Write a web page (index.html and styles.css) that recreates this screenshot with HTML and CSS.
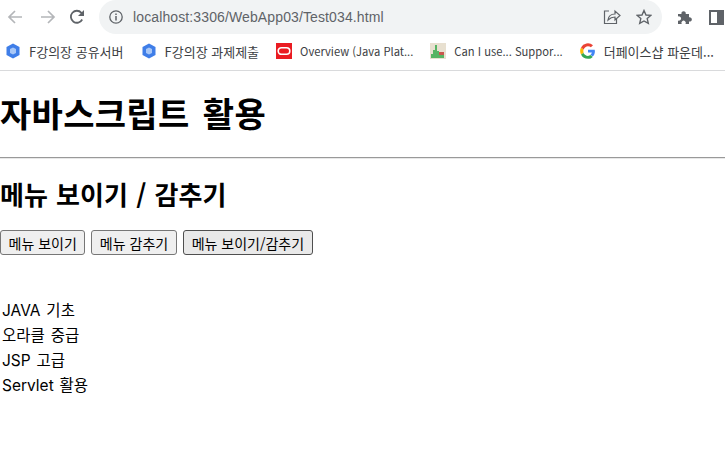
FILE: index.html
```html
<!DOCTYPE html>
<html lang="ko">
<head>
    <meta charset="UTF-8">
    <title>Test034</title>
    <link rel="stylesheet" href="styles.css">
</head>
<body>
    <div class="toolbar">
        <svg class="nav-icon" width="16" height="16" viewBox="0 0 16 16"><path d="M15 8H2M8 2 2 8l6 6" fill="none" stroke="#b4b6b9" stroke-width="1.7"/></svg>
        <svg class="nav-icon fwd" width="16" height="16" viewBox="0 0 16 16"><path d="M1 8h13M8 2l6 6-6 6" fill="none" stroke="#b4b6b9" stroke-width="1.7"/></svg>
        <svg class="nav-icon reload" width="16" height="16" viewBox="0 0 16 16"><path d="M13.2 10.5A6 6 0 1 1 12.4 3.8L14 5.5" fill="none" stroke="#5f6368" stroke-width="1.8"/><path d="M15 1v6H9z" fill="#5f6368"/></svg>
        <div class="omnibox">
            <svg width="16" height="16" viewBox="0 0 16 16"><circle cx="8" cy="8" r="6.2" fill="none" stroke="#5f6368" stroke-width="1.3"/><path d="M8 7v4.4M8 4.4v1.5" stroke="#5f6368" stroke-width="1.5"/></svg>
            <span class="url">localhost:3306/WebApp03/Test034.html</span>
            <svg class="share" width="18" height="16" viewBox="0 0 18 16"><path d="M6 2H1.500v12.500h12V10" fill="none" stroke="#5f6368" stroke-width="1.200"/><path d="M5 11c.5-4 3-6 7-6V2l5 4.500-5 4.500V8c-3 0-5 1-7 3z" fill="none" stroke="#5f6368" stroke-width="1.200"/></svg>
            <svg class="star" width="16" height="16" viewBox="0 0 16 16"><path d="m8 1.500 2 4.500 4.800.4-3.600 3.200 1.100 4.800L8 12l-4.300 2.400 1.100-4.800L1.200 6.400 6 6z" fill="none" stroke="#5f6368" stroke-width="1.400"/></svg>
        </div>
        <svg class="puzzle" width="16" height="16" viewBox="0 0 16 16"><path d="M1 5h3.500a2.200 2.200 0 1 1 4.200 0H12v3.300a2.200 2.200 0 1 1 0 4.200V15H8.500a2.200 2.200 0 1 0-3.800 0H1v-3.500a2.200 2.200 0 1 0 0-4z" fill="#5f6368"/></svg>
        <svg class="panel" width="15" height="15" viewBox="0 0 15 15"><rect x="1" y="1" width="13" height="13" fill="none" stroke="#5f6368" stroke-width="2"/><rect x="8" y="1" width="6" height="13" fill="#5f6368"/></svg>
    </div>
    <div class="bookmarks">
        <a class="mark ko">
            <svg width="16" height="16" viewBox="0 0 16 16"><path d="M8 0.500 14.500 4v8L8 15.500 1.500 12V4z" fill="#3f7ee8"/><path d="M8 4.500 11 6v4L8 11.500 5 10V6z" fill="#a9c8f7"/></svg>
            <span>F강의장 공유서버</span>
        </a>
        <a class="mark ko">
            <svg width="16" height="16" viewBox="0 0 16 16"><path d="M8 0.500 14.500 4v8L8 15.500 1.500 12V4z" fill="#3f7ee8"/><path d="M8 4.500 11 6v4L8 11.500 5 10V6z" fill="#a9c8f7"/></svg>
            <span>F강의장 과제제출</span>
        </a>
        <a class="mark">
            <svg width="16" height="16" viewBox="0 0 16 16"><rect width="16" height="16" fill="#ea1b22"/><rect x="2.200" y="4.700" width="11.600" height="6.600" rx="3.300" fill="none" stroke="#fff" stroke-width="1.600"/></svg>
            <span>Overview (Java Plat...</span>
        </a>
        <a class="mark">
            <svg width="16" height="16" viewBox="0 0 16 16"><rect width="16" height="16" fill="#e8e0d0"/><path d="M1 15V11h2V7h2V2h2v6h2v4h5v3z" fill="#56b463"/><rect x="9" y="9" width="5" height="3" fill="#c9584d"/></svg>
            <span>Can I use... Suppor...</span>
        </a>
        <a class="mark ko">
            <svg width="16" height="16" viewBox="0 0 16 16"><path d="M14.700 6.700H8v2.800h3.900a3.900 3.900 0 0 1-1.500 2.300l2.300 1.800c1.500-1.300 2.200-3.300 2.200-5.300z" fill="#4285f4"/><path d="M3.600 9.500l-.6.400-2 1.600A7.800 7.800 0 0 0 8 15.800c2 0 3.700-.7 4.700-1.900l-2.300-1.800c-.6.500-1.400.8-2.400.8-1.900 0-3.600-1.300-4.400-2.400z" fill="#34a853"/><path d="M1 4.500a7.800 7.800 0 0 0 0 7l2.600-2a4.700 4.700 0 0 1 0-3z" fill="#fbbc05"/><path d="M8 3.200c1.100 0 2.100.4 2.900 1.100l2.100-2.100A7.800 7.800 0 0 0 1 4.500l2.600 2C4.400 4.500 6.100 3.200 8 3.200z" fill="#ea4335"/></svg>
            <span>더페이스샵 파운데...</span>
        </a>
    </div>
    <div class="page">
        <h1>자바스크립트 활용</h1>
        <hr>
        <h2>메뉴 보이기 / 감추기</h2>
        <div class="btn-row">
            <button class="btn">메뉴 보이기</button>
            <button class="btn">메뉴 감추기</button>
            <button class="btn active">메뉴 보이기/감추기</button>
        </div>
        <ul class="menu">
            <li>JAVA 기초</li>
            <li>오라클 중급</li>
            <li>JSP 고급</li>
            <li>Servlet 활용</li>
        </ul>
    </div>
</body>
</html>
```

FILE: styles.css
```css
html, body {
    margin: 0;
    padding: 0;
    height: 100%;
    overflow: hidden;
    background-color: #fff;
    color: #000;
    font-family: "Noto Sans CJK KR", "Noto Sans", sans-serif;
}

.toolbar {
    display: flex;
    align-items: center;
    height: 34px;
}

.nav-icon {
    margin-left: 7px;
    margin-right: 6px;
    flex: none;
}

.fwd {
    margin-left: 11px;
}

.reload {
    margin-left: 7px;
    margin-right: 0;
}

.omnibox {
    display: flex;
    align-items: center;
    width: 563px;
    height: 34px;
    margin-left: 14px;
    padding-left: 9px;
    box-sizing: border-box;
    background-color: #f1f3f4;
    border-radius: 17px;
}

.url {
    flex: 1;
    margin-left: 9px;
    font-family: "Liberation Sans", sans-serif;
    font-size: 14px;
    letter-spacing: 0.12px;
    color: #5f6368;
}

.share {
    margin-right: 15px;
}

.star {
    margin-right: 10px;
}

.puzzle {
    margin-left: 15px;
}

.panel {
    margin-left: 16px;
}

.bookmarks {
    display: flex;
    align-items: center;
    height: 37px;
    padding: 0 0 2px 5px;
    border-bottom: 1px solid #d9dadc;
    box-sizing: border-box;
    font-size: 11.2px;
    color: #3c4043;
}

.mark {
    display: flex;
    align-items: center;
    gap: 8px;
    margin-right: 17px;
    white-space: nowrap;
}

.ko {
    font-size: 13px;
}

h1 {
    margin: 0;
    padding-top: 21px;
    font-size: 34px;
    line-height: 42px;
    font-weight: bold;
    letter-spacing: 0.3px;
    word-spacing: 3.5px;
}

hr {
    margin: 23px 0 0;
    border: 0;
    border-top: 1px solid #999;
    border-bottom: 1px solid #e8e8e8;
}

h2 {
    margin: 17px 0 0;
    font-size: 26px;
    line-height: 35px;
    font-weight: bold;
    word-spacing: 1px;
}

.btn-row {
    display: flex;
    gap: 6px;
    margin-top: 19px;
}

.btn {
    height: 25px;
    padding: 0 7.5px;
    font-family: inherit;
    font-size: 14px;
    color: #000;
    background-color: #efefef;
    border: 1px solid #767676;
    border-radius: 3px;
}

.active {
    padding: 0 8px;
    border-color: #4f4f4f;
    background-color: #e9e9e9;
}

.menu {
    list-style: none;
    margin: 43px 0 0;
    padding: 0 0 0 2px;
    font-family: "Inter", "Noto Sans CJK KR", sans-serif;
    font-size: 15.5px;
    line-height: 25px;
    word-spacing: 1.5px;
}
```
